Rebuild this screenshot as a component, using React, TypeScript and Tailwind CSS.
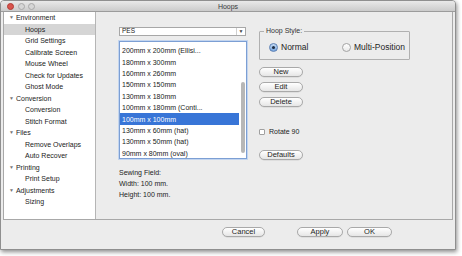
import React from 'react';

interface NavItem {
  label: string;
  group?: boolean;
  active?: boolean;
}

const navItems: NavItem[] = [
  { label: 'Environment', group: true },
  { label: 'Hoops', active: true },
  { label: 'Grid Settings' },
  { label: 'Calibrate Screen' },
  { label: 'Mouse Wheel' },
  { label: 'Check for Updates' },
  { label: 'Ghost Mode' },
  { label: 'Conversion', group: true },
  { label: 'Conversion' },
  { label: 'Stitch Format' },
  { label: 'Files', group: true },
  { label: 'Remove Overlaps' },
  { label: 'Auto Recover' },
  { label: 'Printing', group: true },
  { label: 'Print Setup' },
  { label: 'Adjustments', group: true },
  { label: 'Sizing' }
];

const hoops = [
  '200mm x 200mm (Ellisi...',
  '180mm x 300mm',
  '160mm x 260mm',
  '150mm x 150mm',
  '130mm x 180mm',
  '100mm x 180mm (Conti...',
  '100mm x 100mm',
  '130mm x 60mm (hat)',
  '130mm x 50mm (hat)',
  '90mm x 80mm (oval)'
];

const font = "font-['Liberation_Sans',Arial,sans-serif]";

const PillButton: React.FC<{ label: string; className?: string }> = ({ label, className = '' }) => (
  <div
    className={`h-[10px] rounded-full border border-[#a9a9a9] bg-gradient-to-b from-[#ffffff] to-[#e6e6e6] flex items-center justify-center text-[7.5px] leading-none text-[#1e1e1e] shadow-[0_0.5px_0_rgba(0,0,0,0.12)] ${className}`}
  >
    {label}
  </div>
);

const Radio: React.FC<{ label: string; checked?: boolean }> = ({ label, checked = false }) => (
  <div className="flex items-center gap-[3px]">
    {checked ? (
      <div className="w-[9px] h-[9px] rounded-full border border-[#5b7fb4] bg-gradient-to-b from-[#c4daf4] to-[#78a6de] flex items-center justify-center">
        <div className="w-[3px] h-[3px] rounded-full bg-[#1d2b40]" />
      </div>
    ) : (
      <div className="w-[9px] h-[9px] rounded-full border border-[#a3a3a3] bg-gradient-to-b from-[#ffffff] to-[#e9e9e9]" />
    )}
    <span className="text-[8.5px] leading-none text-[#1e1e1e]">{label}</span>
  </div>
);

export default function App() {
  return (
    <div className={`w-[462px] h-[256px] bg-white ${font}`}>
      <div className="w-[456px] h-[250px] flex flex-col bg-[#ececec] border border-[#8f8f8f] rounded-t-[4px] shadow-[1px_2px_4px_rgba(0,0,0,0.45)] overflow-hidden">
        {/* title bar */}
        <div className="h-[11px] shrink-0 flex items-center relative bg-gradient-to-b from-[#e9e9e9] to-[#cbcbcb] border-b border-[#9c9c9c]">
          <div className="flex items-center gap-[3.5px] pl-[6px]">
            <div className="w-[7px] h-[7px] rounded-full bg-[#d9544d] border border-[#b23a33]" />
            <div className="w-[7px] h-[7px] rounded-full bg-[#d6d6d6] border border-[#a8a8a8]" />
            <div className="w-[7px] h-[7px] rounded-full bg-[#d6d6d6] border border-[#a8a8a8]" />
          </div>
          <div className="flex-1 text-center pr-[34px] text-[7px] leading-none text-[#3a3a3a]">Hoops</div>
        </div>

        {/* main region */}
        <div className="px-[2px] shrink-0">
          <div className="h-[208px] flex border-x border-b border-[#a8a8a8]">
            <div className="w-[92px] shrink-0 bg-white border-r border-[#b5b5b5]">
              {navItems.map((item, index) => (
                <div
                  key={index}
                  className={`h-[11.5px] flex items-center text-[7px] leading-none text-[#222] ${
                    item.active ? 'bg-[#d5d5d5]' : ''
                  } ${item.group ? 'pl-[5px]' : 'pl-[21px]'}`}
                >
                  {item.group && <span className="text-[5px] text-[#777] mr-[2px]">▼</span>}
                  {item.label}
                </div>
              ))}
            </div>

            <div className="flex-1 flex pl-[23px] pt-[15px] gap-[12px]">
              <div className="w-[128px] flex flex-col">
                <div className="w-[127px] h-[9px] flex bg-white border border-[#a7a7a7]">
                  <div className="flex-1 flex items-center pl-[2px] text-[6.5px] leading-none text-[#222]">PES</div>
                  <div className="w-[9px] border-l border-[#d0d0d0] flex items-center justify-center text-[5px] leading-none text-[#444]">▼</div>
                </div>

                <div className="mt-[5px] h-[118px] flex bg-white border border-[#7c9fd4] shadow-[0_0_0_1px_#c3d5ef]">
                  <div className="flex-1 pt-[3px]">
                    {hoops.map((hoop, index) => (
                      <div
                        key={index}
                        className={`h-[11.4px] flex items-center pl-[2px] text-[7px] leading-none ${
                          index === 6 ? 'bg-[#3875d7] text-white' : 'text-[#222]'
                        }`}
                      >
                        {hoop}
                      </div>
                    ))}
                  </div>
                  <div className="w-[7px] flex flex-col items-center pt-[40px]">
                    <div className="w-[4px] h-[71px] rounded-full bg-[#b7b7b7]" />
                  </div>
                </div>

                <div className="mt-[7.5px] text-[7px] leading-[11px] text-[#222]">
                  <div>Sewing Field:</div>
                  <div>Width: 100 mm.</div>
                  <div>Height: 100 mm.</div>
                </div>
              </div>

              <div className="w-[151px] flex flex-col">
                <fieldset className="h-[33px] border border-[#b0b0b0] rounded-[1px]">
                  <legend className="ml-[4px] px-[2px] text-[7px] leading-[8px] text-[#333]">Hoop Style:</legend>
                  <div className="flex items-center justify-between pl-[9px] pr-[4px] pt-[8px]">
                    <Radio label="Normal" checked />
                    <Radio label="Multi-Position" />
                  </div>
                </fieldset>

                <div className="mt-[7px] w-[44px] flex flex-col gap-[5px]">
                  <PillButton label="New" />
                  <PillButton label="Edit" />
                  <PillButton label="Delete" />
                </div>

                <div className="mt-[21px] flex items-center gap-[4px]">
                  <div className="w-[6px] h-[6px] bg-white border border-[#a0a0a0] rounded-[1px]" />
                  <span className="text-[7px] leading-none text-[#222]">Rotate 90</span>
                </div>

                <PillButton label="Defaults" className="mt-[15px] w-[44px]" />
              </div>
            </div>
          </div>
        </div>

        {/* footer */}
        <div className="flex-1 flex items-start pt-[7px] pl-[221px]">
          <PillButton label="Cancel" className="w-[43px]" />
          <PillButton label="Apply" className="w-[46px] ml-[32px]" />
          <PillButton label="OK" className="w-[45px] ml-[4px]" />
        </div>
      </div>
    </div>
  );
}
